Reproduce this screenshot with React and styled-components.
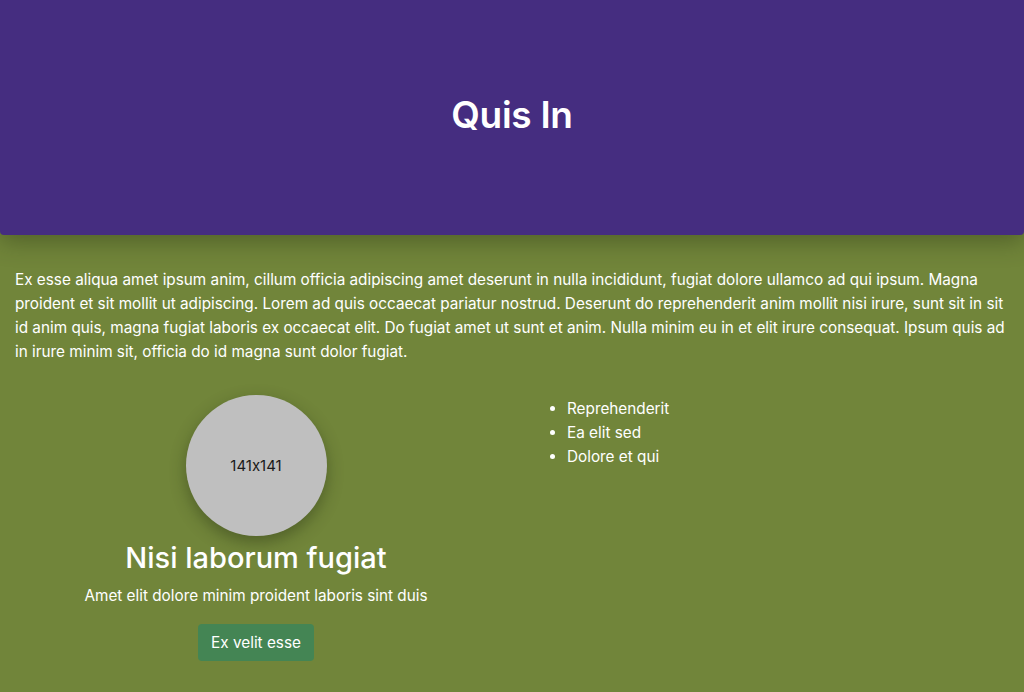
import React from 'react';
import styled, { createGlobalStyle } from 'styled-components';

const GlobalStyle = createGlobalStyle`
  html, body {
    margin: 0;
    padding: 0;
    background: #71853a;
    font-family: Inter, "Noto Sans", sans-serif;
    font-feature-settings: "calt" 0;
    color: #fff;
  }
  * { box-sizing: border-box; }
`;

const Page = styled.div`
  min-height: 692px;
  background: #71853a;
`;

const Header = styled.header`
  height: 235px;
  padding-bottom: 6px;
  background: #452d80;
  border-radius: 0 0 4px 4px;
  box-shadow: 0 6px 24px rgba(40, 50, 20, 0.45);
  display: flex;
  align-items: center;
  justify-content: center;
`;

const Title = styled.h1`
  margin: 0;
  font-size: 37px;
  font-weight: 600;
  letter-spacing: -0.3px;
`;

const Main = styled.main`
  padding: 15px;
`;

const Intro = styled.p`
  margin: 18px 0 31px;
  font-size: 15.3px;
  line-height: 24px;
`;

const Row = styled.div`
  display: grid;
  grid-template-columns: 1fr 1fr;
  margin: 0 -15px;
`;

const Column = styled.div`
  padding: 0 15px;
  display: flex;
  flex-direction: column;
  align-items: ${p => (p.$center ? 'center' : 'stretch')};
  text-align: ${p => (p.$center ? 'center' : 'left')};
`;

const Avatar = styled.div`
  width: 141px;
  height: 141px;
  border-radius: 50%;
  background: #bfbfbf;
  color: #1a1a1a;
  display: flex;
  align-items: center;
  justify-content: center;
  font-size: 15px;
  box-shadow: 0 6px 16px rgba(40, 50, 20, 0.45);
`;

const CardTitle = styled.h2`
  margin: 4px 0 0;
  font-size: 29px;
  font-weight: 500;
  line-height: 36px;
`;

const CardText = styled.p`
  margin: 8px 0 16px;
  font-size: 15.3px;
  line-height: 24px;
`;

const Button = styled.button`
  font-family: inherit;
  font-size: 15.3px;
  color: #fff;
  background: #448554;
  border: none;
  border-radius: 4px;
  padding: 0 13px;
  height: 37px;
  cursor: pointer;
`;

const List = styled.ul`
  margin: 2px 0 0;
  padding-left: 40px;
  font-size: 15.3px;
  line-height: 24px;
`;

export default function App() {
  return (
    <Page>
      <GlobalStyle />
      <Header>
        <Title>Quis In</Title>
      </Header>
      <Main>
        <Intro>
          Ex esse aliqua amet ipsum anim, cillum officia adipiscing amet deserunt in nulla incididunt, fugiat dolore ullamco ad qui ipsum. Magna proident et sit mollit ut adipiscing. Lorem ad quis occaecat pariatur nostrud. Deserunt do reprehenderit anim mollit nisi irure, sunt sit in sit id anim quis, magna fugiat laboris ex occaecat elit. Do fugiat amet ut sunt et anim. Nulla minim eu in et elit irure consequat. Ipsum quis ad in irure minim sit, officia do id magna sunt dolor fugiat.
        </Intro>
        <Row>
          <Column $center>
            <Avatar>141x141</Avatar>
            <CardTitle>Nisi laborum fugiat</CardTitle>
            <CardText>Amet elit dolore minim proident laboris sint duis</CardText>
            <Button>Ex velit esse</Button>
          </Column>
          <Column>
            <List>
              <li>Reprehenderit</li>
              <li>Ea elit sed</li>
              <li>Dolore et qui</li>
            </List>
          </Column>
        </Row>
      </Main>
    </Page>
  );
}
